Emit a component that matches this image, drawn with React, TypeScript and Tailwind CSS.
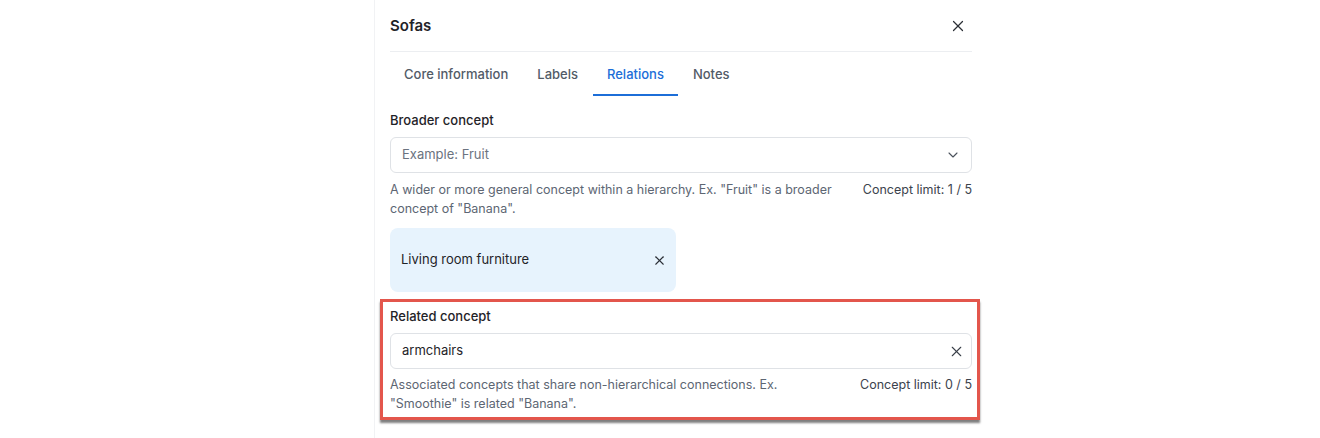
import React, { useState } from 'react';
import { X, ChevronDown } from 'lucide-react';

const tabs = ['Core information', 'Labels', 'Relations', 'Notes'];

export default function App() {
  const [activeTab, setActiveTab] = useState('Relations');
  const [related, setRelated] = useState('armchairs');

  return (
    <div className="w-[1320px] h-[438px] bg-white overflow-hidden flex" style={{ fontFamily: 'Inter, "Noto Sans", sans-serif' }}>
      <div className="ml-[374px] w-[614px] h-full border-l border-[#f1f2f4] pl-[15px] pr-[16px] text-[#1f2328]">
        {/* Header */}
        <div className="flex items-center justify-between h-[52px] pt-[1px] border-b border-[#eceef1]">
          <h1 className="text-[15px] font-semibold leading-5">Sofas</h1>
          <button className="w-6 h-6 flex items-center justify-center text-[#2b2f36] mr-[2px]">
            <X size={18} strokeWidth={1.6} />
          </button>
        </div>

        {/* Tabs */}
        <div className="flex gap-[1px] h-[44px]">
          {tabs.map((tab) => (
            <button
              key={tab}
              onClick={() => setActiveTab(tab)}
              className={`px-[14px] text-[13px] font-medium leading-5 border-b-2 pt-[1px] ${
                activeTab === tab
                  ? 'text-[#1c6ed8] border-[#1c6ed8]'
                  : 'text-[#525b67] border-transparent'
              }`}
            >
              {tab}
            </button>
          ))}
        </div>

        {/* Broader concept */}
        <div className="mt-[14px]">
          <label className="block text-[13px] font-medium leading-5">Broader concept</label>
          <div className="mt-[7px] h-[36px] rounded-md border border-[#dfe2e6] flex items-center justify-between pl-[11px] pr-[10px]">
            <span className="text-[13px] text-[#6b7380]">Example: Fruit</span>
            <ChevronDown size={16} strokeWidth={1.6} className="text-[#4a515b]" />
          </div>
          <div className="mt-[7px] flex justify-between gap-6 text-[12.5px] leading-[19px]">
            <p className="text-[#5d6673] max-w-[450px]">
              A wider or more general concept within a hierarchy. Ex. "Fruit" is a broader concept of "Banana".
            </p>
            <span className="text-[#3c434d] whitespace-nowrap">Concept limit: 1 / 5</span>
          </div>
        </div>

        {/* Chip */}
        <div className="mt-[10px] w-[286px] h-[64px] rounded-lg bg-[#e7f3fd] flex items-center justify-between pl-[11px] pr-[9px]">
          <span className="text-[13px] text-[#1f2328]">Living room furniture</span>
          <X size={15} strokeWidth={1.7} className="text-[#2b2f36]" />
        </div>

        {/* Related concept (highlighted) */}
        <div className="mt-[7px] -ml-[10px] -mr-[8px] border-[3px] border-[#e3564c] pl-[7px] pr-[5px] pt-[4px] pb-[4px] shadow-[0_3px_2px_rgba(0,0,0,0.5)]">
          <label className="block text-[13px] font-medium leading-5">Related concept</label>
          <div className="mt-[7px] h-[36px] rounded-md border border-[#dfe2e6] flex items-center justify-between pl-[11px] pr-[6px]">
            <input
              value={related}
              onChange={(e) => setRelated(e.target.value)}
              className="flex-1 outline-none text-[13px] text-[#1f2328] bg-transparent"
            />
            <button onClick={() => setRelated('')} className="text-[#3a4049]">
              <X size={17} strokeWidth={1.5} />
            </button>
          </div>
          <div className="mt-[6px] flex justify-between gap-6 text-[12.5px] leading-[19px]">
            <p className="text-[#5d6673] max-w-[400px]">
              Associated concepts that share non-hierarchical connections. Ex. "Smoothie" is related "Banana".
            </p>
            <span className="text-[#3c434d] whitespace-nowrap">Concept limit: 0 / 5</span>
          </div>
        </div>
      </div>
    </div>
  );
}
